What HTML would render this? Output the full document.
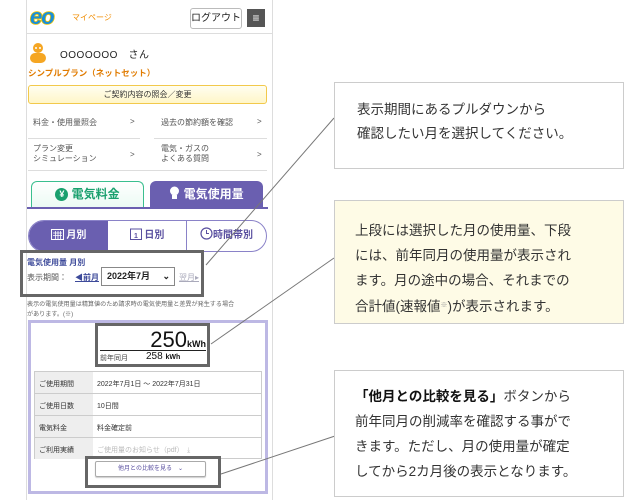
<!DOCTYPE html>
<html><head><meta charset="utf-8"><style>
*{box-sizing:border-box;margin:0;padding:0}
body{width:640px;height:500px;background:#fff;font-family:"Liberation Sans","Noto Sans CJK JP",sans-serif;position:relative;overflow:hidden;color:#333}
.a{position:absolute}
.s{font-size:8px;color:#555}
</style></head><body>
<div class="a" style="left:26px;top:0;width:247px;height:500px;border-left:1px solid #ddd;border-right:1px solid #ddd"></div>
<!-- header -->
<svg class="a" style="left:28px;top:5px" width="42" height="24"><text x="2" y="19" font-family="Liberation Sans" font-weight="bold" font-style="italic" font-size="22" fill="#1a8fd8" stroke="#f2c400" stroke-width="1.5" paint-order="stroke" letter-spacing="-1">eo</text></svg>
<div class="a" style="left:72px;top:12px;font-size:8px;color:#f08c00">マイページ</div>
<div class="a" style="left:190px;top:8px;width:52px;height:21px;border:1px solid #bbb;border-radius:3px;font-size:10px;text-align:center;line-height:19px;color:#222">ログアウト</div>
<div class="a" style="left:247px;top:9px;width:18px;height:18px;background:#555;color:#fff;font-size:12px;text-align:center;line-height:18px">≡</div>
<div class="a" style="left:27px;top:33px;width:245px;height:1px;background:#ddd"></div>
<svg class="a" style="left:28px;top:42px" width="20" height="21"><circle cx="10" cy="6" r="5" fill="#f5a623"/><rect x="2" y="11" width="16" height="10" rx="5" fill="#f5a623"/><circle cx="8" cy="6" r="1" fill="#fff"/><circle cx="12" cy="6" r="1" fill="#fff"/></svg>
<div class="a" style="left:60px;top:46px;font-size:10px;color:#222;letter-spacing:0.5px">OOOOOOO　さん</div>
<div class="a" style="left:28px;top:67px;font-size:8.5px;color:#e07b00;font-weight:bold">シンプルプラン（ネットセット）</div>
<div class="a" style="left:28px;top:85px;width:239px;height:19px;border:1px solid #f2c94c;border-radius:3px;background:linear-gradient(#fffef0,#fff6c8);font-size:8px;text-align:center;line-height:17px">ご契約内容の照会／変更</div>
<div class="a s" style="left:33px;top:117px">料金・使用量照会</div><div class="a s" style="left:130px;top:117px">&gt;</div>
<div class="a s" style="left:161px;top:117px">過去の節約額を確認</div><div class="a s" style="left:257px;top:117px">&gt;</div>
<div class="a" style="left:28px;top:138px;width:112px;height:1px;background:#ddd"></div>
<div class="a" style="left:154px;top:138px;width:113px;height:1px;background:#ddd"></div>
<div class="a s" style="left:33px;top:144px;line-height:10px">プラン変更<br>シミュレーション</div><div class="a s" style="left:130px;top:150px">&gt;</div>
<div class="a s" style="left:161px;top:144px;line-height:10px">電気・ガスの<br>よくある質問</div><div class="a s" style="left:257px;top:150px">&gt;</div>
<div class="a" style="left:28px;top:170px;width:239px;height:1px;background:#ddd"></div>
<!-- tabs -->
<div class="a" style="left:31px;top:181px;width:113px;height:27px;border:1.5px solid #3bbf8f;border-bottom:none;border-radius:6px 6px 0 0;background:linear-gradient(#fff,#eafaf3);font-size:12px;font-weight:bold;color:#1aa06e;text-align:center;line-height:25px"><span style="display:inline-block;width:13px;height:13px;border-radius:50%;background:#1aa06e;color:#fff;font-size:9px;line-height:13px;vertical-align:1px">¥</span> 電気料金</div>
<div class="a" style="left:150px;top:181px;width:113px;height:27px;background:#6a5fb0;border-radius:6px 6px 0 0;font-size:12px;font-weight:bold;color:#fff;text-align:center;line-height:27px"><svg width="11" height="14" style="vertical-align:-2px"><circle cx="5.5" cy="5" r="4.5" fill="#fff"/><rect x="3" y="9" width="5" height="4" fill="#fff"/></svg> 電気使用量</div>
<div class="a" style="left:27px;top:207px;width:241px;height:2px;background:#6a5fb0"></div>
<!-- segments -->
<div class="a" style="left:28px;top:220px;width:239px;height:32px;border:1px solid #8a82c8;border-radius:16px;overflow:hidden;display:flex;font-size:10px;font-weight:bold;color:#5a50a0">
<div style="width:79px;background:#6a5fb0;color:#fff;text-align:center;line-height:30px"><svg width="13" height="12" style="vertical-align:-2px"><rect x="0.5" y="1.5" width="12" height="10" fill="none" stroke="#fff"/><path d="M2 5h9M2 7.5h9M4.5 3v8M7 3v8M9.5 3v8" stroke="#fff" stroke-width=".8"/></svg> 月別</div>
<div style="width:79px;border-right:1px solid #8a82c8;text-align:center;line-height:30px"><svg width="12" height="13" style="vertical-align:-2px"><rect x="0.5" y="2" width="11" height="10.5" fill="#fff" stroke="#5a50a0"/><text x="4" y="11" font-size="7" fill="#5a50a0">1</text></svg> 日別</div>
<div style="flex:1;text-align:center;line-height:30px"><svg width="13" height="13" style="vertical-align:-2px"><circle cx="6.5" cy="6.5" r="5.5" fill="none" stroke="#5a50a0" stroke-width="1.2"/><path d="M6.5 3v3.5h2.5" stroke="#5a50a0" fill="none"/></svg>時間帯別</div></div>
<div class="a" style="left:27px;top:257px;font-size:8px;font-weight:bold;color:#3d4a9a">電気使用量 月別</div>
<div class="a s" style="left:27px;top:272px">表示期間：</div>
<div class="a" style="left:75px;top:272px;font-size:8px;color:#3d4a9a;text-decoration:underline;font-weight:bold">◀前月</div>
<div class="a" style="left:101px;top:267px;width:74px;height:19px;border:1px solid #888;font-size:9px;font-weight:bold;color:#222;line-height:17px;padding-left:5px">2022年7月 <span style="float:right;margin-right:4px">⌄</span></div>
<div class="a" style="left:179px;top:272px;font-size:8px;color:#aab;text-decoration:underline">翌月▸</div>
<div class="a" style="left:27px;top:300px;font-size:6.1px;color:#666;line-height:10px;white-space:nowrap">表示の電気使用量は精算値のため請求時の電気使用量と差異が発生する場合<br>があります。(※)</div>
<!-- purple box -->
<div class="a" style="left:28px;top:320px;width:240px;height:174px;border:3px solid #bdb8e4"></div>
<div class="a" style="left:100px;top:327px;font-size:22px;color:#111;width:106px;text-align:right">250<span style="font-size:9px;font-weight:bold">kWh</span></div>
<div class="a" style="left:100px;top:350px;width:106px;height:1px;background:#222"></div>
<div class="a" style="left:100px;top:353px;font-size:7px;color:#444">前年同月</div>
<div class="a" style="left:146px;top:351px;font-size:10px;color:#111">258 <span style="font-size:7px;font-weight:bold">kWh</span></div>
<div class="a" style="left:34px;top:371px;width:228px;height:88px;border:1px solid #ccc;font-size:7px;color:#333">
<div style="display:flex;height:22px;border-bottom:1px solid #ccc"><div style="width:58px;background:#eee;padding:7px 4px">ご使用期間</div><div style="padding:7px 4px">2022年7月1日 ～ 2022年7月31日</div></div>
<div style="display:flex;height:22px;border-bottom:1px solid #ccc"><div style="width:58px;background:#eee;padding:7px 4px">ご使用日数</div><div style="padding:7px 4px">10日間</div></div>
<div style="display:flex;height:22px;border-bottom:1px solid #ccc"><div style="width:58px;background:#eee;padding:7px 4px">電気料金</div><div style="padding:7px 4px">料金確定前</div></div>
<div style="display:flex;height:21px"><div style="width:58px;background:#eee;padding:7px 4px">ご利用実績</div><div style="padding:7px 4px;color:#bbb">ご使用量のお知らせ（pdf）　⤓</div></div></div>
<div class="a" style="left:95px;top:461px;width:111px;height:16px;border:1px solid #aaa;border-radius:2px;font-size:6px;color:#5a50a0;text-align:center;line-height:14px;box-shadow:0 1px 1px #ccc">他月との比較を見る　⌄</div>
<!-- highlight boxes -->
<div class="a" style="left:20px;top:250px;width:184px;height:47px;border:3px solid #666"></div>
<div class="a" style="left:95px;top:323px;width:115px;height:44px;border:3px solid #666"></div>
<div class="a" style="left:85px;top:456px;width:136px;height:32px;border:3px solid #666"></div>
<!-- lines -->
<svg class="a" style="left:0;top:0" width="640" height="500"><g stroke="#777" stroke-width="1"><line x1="334" y1="118" x2="206" y2="265"/><line x1="334" y1="258" x2="211" y2="344"/><line x1="335" y1="436" x2="221" y2="474"/></g></svg>
<!-- callouts -->
<div class="a" style="left:334px;top:82px;width:290px;height:87px;border:1px solid #ccc;background:#fff;font-size:13.5px;color:#333;line-height:24px;padding:15px 0 0 22px">表示期間にあるプルダウンから<br>確認したい月を選択してください。</div>
<div class="a" style="left:334px;top:200px;width:290px;height:124px;border:1px solid #ccc;background:#fefbe6;font-size:13.5px;color:#333;line-height:25px;padding:17px 0 0 20px">上段には選択した月の使用量、下段<br>には、前年同月の使用量が表示され<br>ます。月の途中の場合、それまでの<br>合計値(速報値<span style="font-size:7px;color:#999;vertical-align:4px">※</span>)が表示されます。</div>
<div class="a" style="left:334px;top:370px;width:290px;height:127px;border:1px solid #ccc;background:#fff;font-size:13.5px;color:#333;line-height:25px;padding:13px 0 0 20px"><b style="color:#111">「他月との比較を見る」</b>ボタンから<br>前年同月の削減率を確認する事がで<br>きます。ただし、月の使用量が確定<br>してから2カ月後の表示となります。</div>
</body></html>
